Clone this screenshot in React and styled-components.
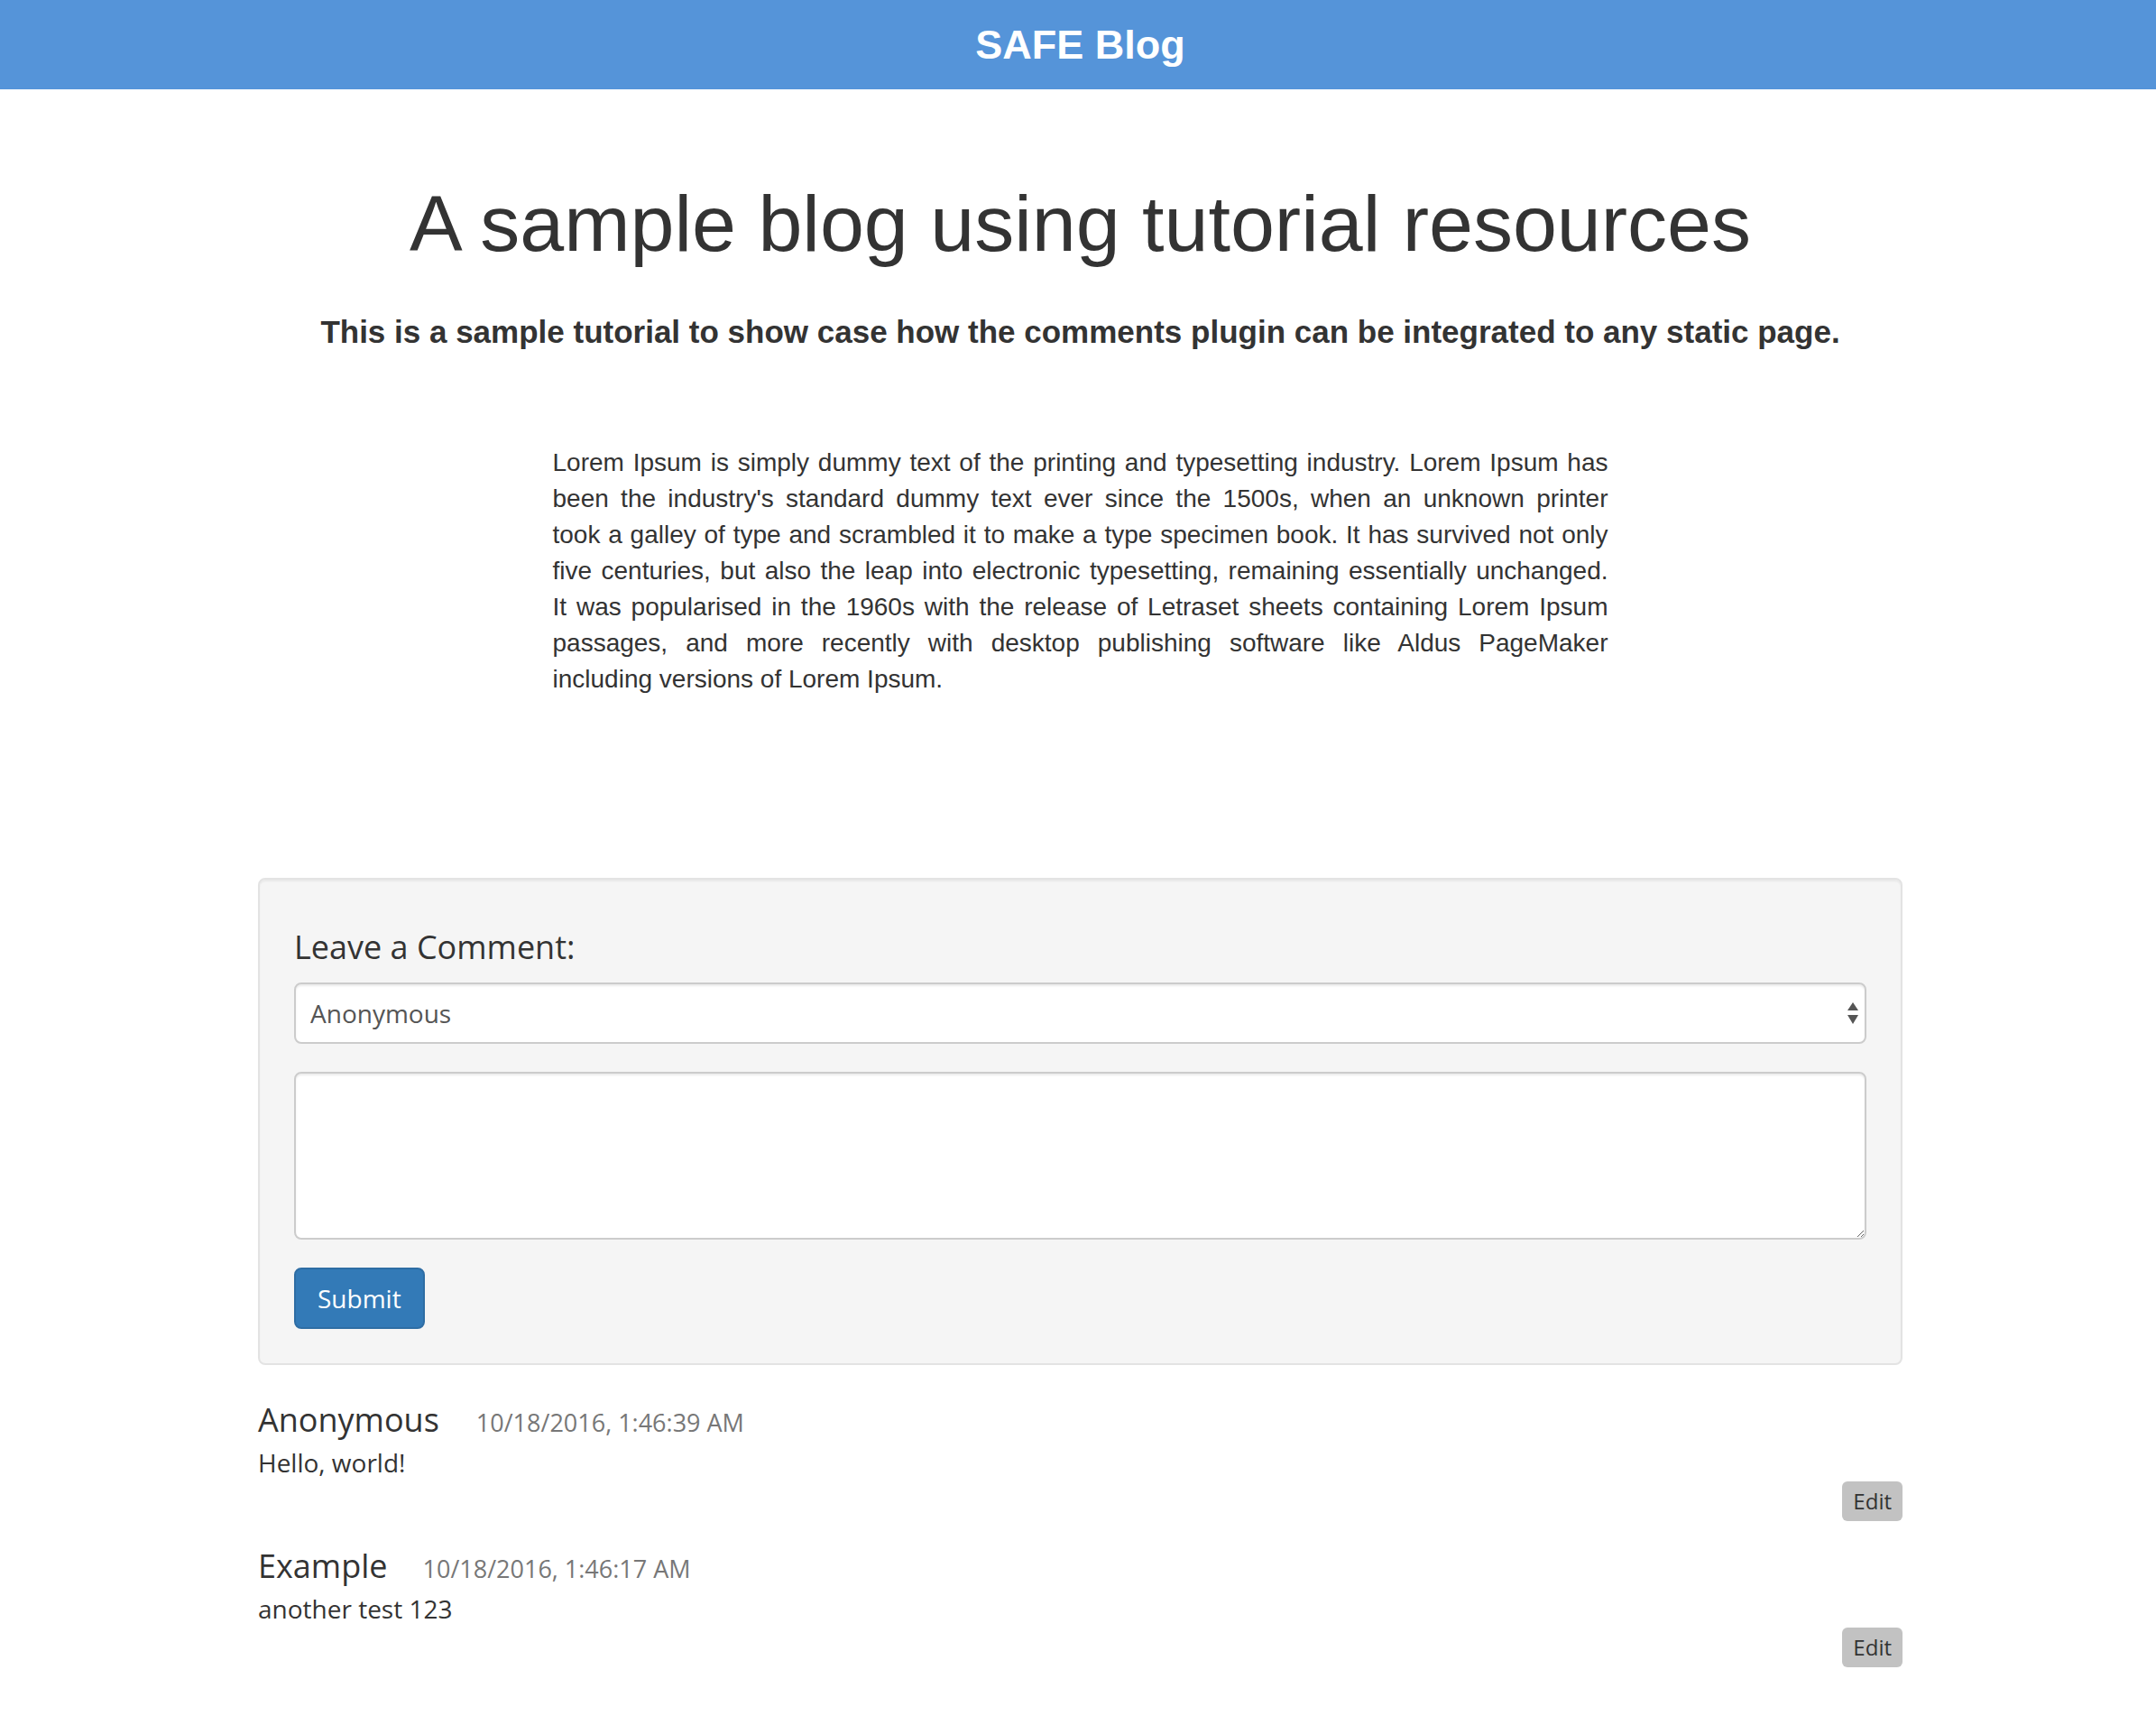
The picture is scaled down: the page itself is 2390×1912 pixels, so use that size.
import styled, { createGlobalStyle } from 'styled-components';

const GlobalStyle = createGlobalStyle`
  body {
    margin: 0;
    background: #fff;
    color: #333;
    font-family: "Liberation Sans", Arial, sans-serif;
  }
  * {
    box-sizing: border-box;
  }
`;

const TopBar = styled.header`
  height: 99px;
  padding-left: 5px;
  background: #5594d9;
  display: flex;
  align-items: center;
  justify-content: center;
`;

const Brand = styled.h1`
  margin: 0;
  font-family: "Liberation Sans", Arial, sans-serif;
  font-weight: 700;
  font-size: 45px;
  line-height: 1;
  color: #fff;
`;

const Main = styled.main`
  padding-left: 5px;
  padding-bottom: 60px;
`;

const Intro = styled.section`
  display: flex;
  flex-direction: column;
  align-items: center;
  text-align: center;
`;

const Title = styled.h1`
  margin: 100px 0 0;
  font-weight: 400;
  font-size: 88px;
  line-height: 97px;
  color: #333;
`;

const Subtitle = styled.h4`
  margin: 52px 0 0;
  font-weight: 700;
  font-size: 35px;
  line-height: 39px;
  color: #333;
`;

const Body = styled.p`
  width: 1170px;
  margin: 106px 0 0;
  font-size: 28px;
  line-height: 40px;
  color: #333;
`;

const Line = styled.span`
  display: block;
  text-align: justify;
  text-align-last: ${p => (p.$last ? 'left' : 'justify')};
`;

const Column = styled.div`
  width: 1823px;
  margin: 0 auto;
  font-family: "Open Sans", "Liberation Sans", sans-serif;
`;

const Well = styled.form`
  margin-top: 200px;
  padding: 56px 38px 38px;
  background: #f5f5f5;
  border: 2px solid #e3e3e3;
  border-radius: 8px;
  box-shadow: inset 0 2px 2px rgba(0, 0, 0, 0.05);
  display: flex;
  flex-direction: column;
  align-items: flex-start;
`;

const Label = styled.h4`
  margin: 0 0 21px;
  font-weight: 400;
  font-size: 36px;
  line-height: 37px;
  color: #333;
`;

const SelectWrap = styled.div`
  position: relative;
  width: 100%;
`;

const Select = styled.select`
  appearance: none;
  width: 100%;
  height: 68px;
  padding: 0 16px;
  font-family: "Open Sans", "Liberation Sans", sans-serif;
  font-size: 28px;
  color: #555;
  background: #fff;
  border: 2px solid #ccc;
  border-radius: 8px;
  box-shadow: inset 0 2px 2px rgba(0, 0, 0, 0.075);
  outline: none;
`;

const Arrows = styled.svg`
  position: absolute;
  right: 8px;
  top: 22px;
  pointer-events: none;
`;

const Message = styled.textarea`
  width: 100%;
  height: 186px;
  margin-top: 31px;
  padding: 12px 24px;
  font-family: "Open Sans", "Liberation Sans", sans-serif;
  font-size: 28px;
  color: #555;
  background: #fff;
  border: 2px solid #ccc;
  border-radius: 8px;
  box-shadow: inset 0 2px 2px rgba(0, 0, 0, 0.075);
  outline: none;
  resize: vertical;
`;

const SubmitButton = styled.button`
  margin-top: 31px;
  height: 68px;
  padding: 0 24px;
  font-family: "Open Sans", "Liberation Sans", sans-serif;
  font-weight: 500;
  font-size: 28px;
  color: #fff;
  background: #337ab7;
  border: 2px solid #2e6da4;
  border-radius: 8px;
  cursor: pointer;
`;

const CommentList = styled.div`
  margin-top: 41px;
  display: flex;
  flex-direction: column;
  gap: 30px;
`;

const Comment = styled.article`
  display: flex;
  flex-direction: column;
`;

const Meta = styled.div`
  display: flex;
  align-items: baseline;
  gap: ${p => p.$gap}px;
  line-height: 40px;
`;

const Author = styled.span`
  font-size: 36px;
  color: #333;
`;

const Stamp = styled.small`
  font-size: 27px;
  color: #777;
`;

const Text = styled.p`
  margin: 4px 0 0;
  font-size: 28px;
  line-height: 40px;
  color: #333;
`;

const EditButton = styled.button`
  align-self: flex-end;
  margin-top: 1px;
  height: 44px;
  padding: 0 12px;
  font-family: "Open Sans", "Liberation Sans", sans-serif;
  font-size: 24px;
  line-height: 1;
  color: #333;
  background: #c2c2c2;
  border: none;
  border-radius: 6px;
  cursor: pointer;
`;

const lorem = [
  'Lorem Ipsum is simply dummy text of the printing and typesetting industry. Lorem Ipsum has',
  "been the industry's standard dummy text ever since the 1500s, when an unknown printer",
  'took a galley of type and scrambled it to make a type specimen book. It has survived not only',
  'five centuries, but also the leap into electronic typesetting, remaining essentially unchanged.',
  'It was popularised in the 1960s with the release of Letraset sheets containing Lorem Ipsum',
  'passages, and more recently with desktop publishing software like Aldus PageMaker',
  'including versions of Lorem Ipsum.',
];

const comments = [
  { author: 'Anonymous', date: '10/18/2016, 1:46:39 AM', text: 'Hello, world!', gap: 41 },
  { author: 'Example', date: '10/18/2016, 1:46:17 AM', text: 'another test 123', gap: 39 },
];

const App = () => {
  return (
    <>
      <GlobalStyle />
      <TopBar>
        <Brand>SAFE Blog</Brand>
      </TopBar>
      <Main>
        <Intro>
          <Title>A sample blog using tutorial resources</Title>
          <Subtitle>
            This is a sample tutorial to show case how the comments plugin can be integrated to any static page.
          </Subtitle>
          <Body>
            {lorem.map((line, i) => (
              <Line key={i} $last={i === lorem.length - 1}>
                {line}
              </Line>
            ))}
          </Body>
        </Intro>
        <Column>
          <Well onSubmit={e => e.preventDefault()}>
            <Label>Leave a Comment:</Label>
            <SelectWrap>
              <Select defaultValue="anonymous">
                <option value="anonymous">Anonymous</option>
              </Select>
              <Arrows width="14" height="26" viewBox="0 0 14 26">
                <path d="M7 0 L13 9 L1 9 Z" fill="#555" />
                <path d="M1 14 L13 14 L7 24 Z" fill="#555" />
              </Arrows>
            </SelectWrap>
            <Message />
            <SubmitButton type="submit">Submit</SubmitButton>
          </Well>
          <CommentList>
            {comments.map(c => (
              <Comment key={c.date}>
                <Meta $gap={c.gap}>
                  <Author>{c.author}</Author>
                  <Stamp>{c.date}</Stamp>
                </Meta>
                <Text>{c.text}</Text>
                <EditButton type="button">Edit</EditButton>
              </Comment>
            ))}
          </CommentList>
        </Column>
      </Main>
    </>
  );
};

export default App;
